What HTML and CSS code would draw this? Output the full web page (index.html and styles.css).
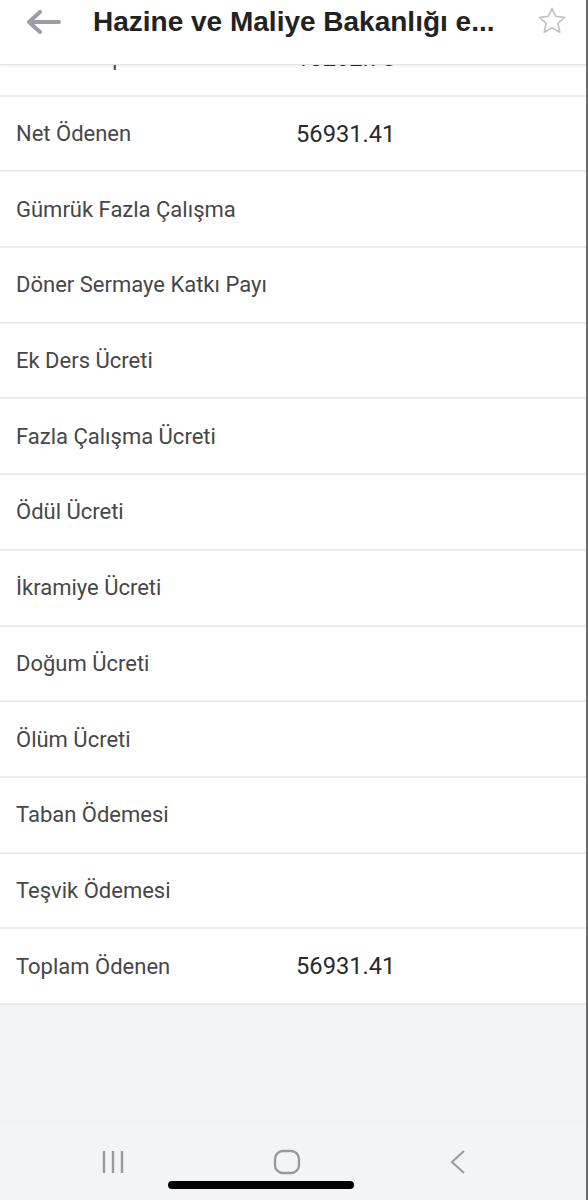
FILE: index.html
```html
<!DOCTYPE html>
<html lang="tr">
<head>
  <meta charset="UTF-8" />
  <meta name="viewport" content="width=device-width, initial-scale=1.0"/>
  <title>Hazine ve Maliye Bakanlığı e-Bordro</title>
  <link rel="stylesheet" href="styles.css">
</head>
<body>
  <div class="screen">

    <header class="appbar">
      <svg class="back" width="36" height="24" viewBox="0 0 36 24">
        <path d="M34 12H5M15 2L4 12l11 10" fill="none" stroke="#9d9ca8" stroke-width="4" stroke-linecap="round" stroke-linejoin="round"/>
      </svg>
      <h1>Hazine ve Maliye Bakanlığı e...</h1>
      <svg class="star" width="32" height="32" viewBox="0 0 24 24">
        <path d="M12 2.5l2.8 6.1 6.6.7-5 4.5 1.4 6.6L12 17l-5.8 3.4 1.4-6.6-5-4.5 6.6-.7z" fill="none" stroke="#c4c4c4" stroke-width="1.3" stroke-linejoin="round"/>
      </svg>
    </header>

    <div class="scroll">
      <ul class="rows">
        <li><span class="label">Kesinti Toplamı</span><span class="value">10262.75</span></li>
        <li><span class="label">Net Ödenen</span><span class="value">56931.41</span></li>
        <li><span class="label">Gümrük Fazla Çalışma</span></li>
        <li><span class="label">Döner Sermaye Katkı Payı</span></li>
        <li><span class="label">Ek Ders Ücreti</span></li>
        <li><span class="label">Fazla Çalışma Ücreti</span></li>
        <li><span class="label">Ödül Ücreti</span></li>
        <li><span class="label">İkramiye Ücreti</span></li>
        <li><span class="label">Doğum Ücreti</span></li>
        <li><span class="label">Ölüm Ücreti</span></li>
        <li><span class="label">Taban Ödemesi</span></li>
        <li><span class="label">Teşvik Ödemesi</span></li>
        <li><span class="label">Toplam Ödenen</span><span class="value">56931.41</span></li>
      </ul>
    </div>

    <div class="filler"></div>

    <nav class="sysbar">
      <svg width="24" height="24" viewBox="0 0 24 24">
        <path d="M3 1v22M12 1v22M21 1v22" stroke="#9a9a9a" stroke-width="2.4"/>
      </svg>
      <svg width="28" height="26" viewBox="0 0 28 26">
        <rect x="2" y="2" width="24" height="22" rx="8" fill="none" stroke="#9a9a9a" stroke-width="2.4"/>
      </svg>
      <svg width="20" height="26" viewBox="0 0 20 26">
        <path d="M16 2L4 13l12 11" fill="none" stroke="#9a9a9a" stroke-width="2"/>
      </svg>
      <div class="homebar"></div>
    </nav>

  </div>
</body>
</html>
```

FILE: styles.css
```css
body {
  margin: 0;
  padding: 0;
  font-family: Roboto, "Noto Sans", sans-serif;
  background: #f1f3f4;
}
.screen {
  width: 588px;
  height: 1200px;
  display: flex;
  flex-direction: column;
  box-sizing: border-box;
  border-right: 2px solid #6a6a6a;
  overflow: hidden;
}
.appbar {
  height: 64px;
  flex: none;
  display: flex;
  align-items: center;
  background: white;
  border-bottom: 1px solid #e4e4e4;
  box-shadow: 0 1px 3px rgba(0,0,0,0.08);
  position: relative;
  z-index: 1;
}
.back {
  margin-left: 25px;
  margin-top: -20px;
}
h1 {
  margin: -20px 0 0 32px;
  font-family: "Liberation Sans", Arial, sans-serif;
  font-size: 28px;
  font-weight: bold;
  color: #222;
  flex: 1;
  white-space: nowrap;
}
.star {
  margin: -22px 18px 0 0;
}
.scroll {
  flex: none;
  background: white;
  overflow: hidden;
}
.rows {
  list-style-type: none;
  margin: -44px 0 0 0;
  padding: 0;
}
.rows li {
  height: 73.7px;
  display: flex;
  align-items: center;
  padding-left: 16px;
  border-bottom: 2px solid #ebebeb;
}
.label {
  width: 280px;
  font-size: 22px;
  color: #474747;
}
.value {
  font-size: 23.7px;
  color: #2a2a2a;
}
.filler {
  flex: 1;
  background: #f1f3f4;
}
.sysbar {
  height: 76px;
  flex: none;
  background: #f3f4f5;
  display: flex;
  align-items: center;
  justify-content: space-between;
  padding: 0 118px 0 101px;
  position: relative;
}
.homebar {
  position: absolute;
  left: 168px;
  bottom: 11px;
  width: 186px;
  height: 8px;
  border-radius: 4px;
  background: #000;
}
```
